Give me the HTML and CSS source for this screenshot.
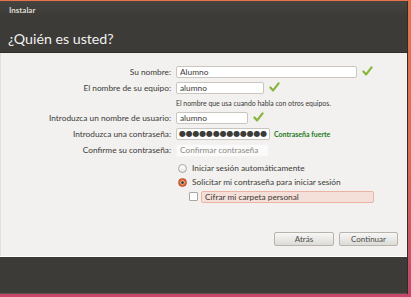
FILE: index.html
```html
<!DOCTYPE html>
<html lang="es">
<head>
    <meta charset="UTF-8">
    <title>Instalar</title>
    <link rel="stylesheet" href="styles.css">
</head>
<body>
    <div class="window">
        <!-- Cabecera oscura -->
        <div class="header">
            <div class="app-title">Instalar</div>
            <h1>¿Quién es usted?</h1>
        </div>

        <!-- Formulario -->
        <div class="content">
            <div class="row">
                <label class="label">Su nombre:</label>
                <input class="field field-name" type="text" value="Alumno">
                <svg class="tick" viewBox="0 0 12 11"><path d="M1.5 6 L4.5 9.3 L10.5 1.5" /></svg>
            </div>
            <div class="row">
                <label class="label">El nombre de su equipo:</label>
                <input class="field field-host" type="text" value="alumno">
                <svg class="tick" viewBox="0 0 12 11"><path d="M1.5 6 L4.5 9.3 L10.5 1.5" /></svg>
            </div>
            <div class="hint">El nombre que usa cuando habla con otros equipos.</div>
            <div class="row">
                <label class="label">Introduzca un nombre de usuario:</label>
                <input class="field field-user" type="text" value="alumno">
                <svg class="tick" viewBox="0 0 12 11"><path d="M1.5 6 L4.5 9.3 L10.5 1.5" /></svg>
            </div>
            <div class="row">
                <label class="label">Introduzca una contraseña:</label>
                <div class="field field-pass"><span class="dots">●●●●●●●●●●●●●</span></div>
                <span class="strength">Contraseña fuerte</span>
            </div>
            <div class="row">
                <label class="label">Confirme su contraseña:</label>
                <input class="field field-confirm" type="text" placeholder="Confirmar contraseña">
            </div>

            <div class="options">
                <div class="option">
                    <span class="radio"></span>
                    <span>Iniciar sesión automáticamente</span>
                </div>
                <div class="option">
                    <span class="radio checked"></span>
                    <span>Solicitar mi contraseña para iniciar sesión</span>
                </div>
                <div class="option sub">
                    <span class="checkbox"></span>
                    <span class="highlight">Cifrar mi carpeta personal</span>
                </div>
            </div>

            <div class="buttons">
                <button class="btn btn-back">Atrás</button>
                <button class="btn">Continuar</button>
            </div>
        </div>

        <div class="footer"></div>
    </div>
</body>
</html>
```

FILE: styles.css
```css
/* Base */
body {
    margin: 0;
    padding: 0;
    width: 411px;
    height: 297px;
    overflow: hidden;
    font-family: 'Lato', 'DejaVu Sans', sans-serif;
    background: linear-gradient(to bottom, #e8734a 0%, #e06a52 50%, #c8456a 100%);
}

/* Ventana */
.window {
    margin-top: 1px;
    width: 408px;
    height: 293px;
    display: flex;
    flex-direction: column;
    background-color: #3c3b37;
    border-right: 1px solid #2e2d2a;
    box-sizing: border-box;
}

/* Cabecera */
.header {
    height: 52px;
    box-sizing: border-box;
    padding: 4px 9px 0;
    background: linear-gradient(to bottom, #45443f 0%, #3c3b37 30%, #3c3b37 100%);
    border-bottom: 1px solid #2f2e2b;
}

.app-title {
    color: #dfdbd2;
    font-size: 8px;
    font-weight: 700;
    line-height: 11px;
}

h1 {
    margin: 14px 0 0 -1px;
    color: #f2f1f0;
    font-size: 14.2px;
    font-weight: 400;
    line-height: 18px;
}

/* Contenido */
.content {
    height: 203px;
    box-sizing: border-box;
    padding-top: 13px;
    background-color: #f2f1f0;
    border-left: 1px solid #e2e0dc;
    display: flex;
    flex-direction: column;
    color: #3c3b37;
    font-size: 8.3px;
}

.row {
    display: flex;
    align-items: center;
    height: 12px;
    margin-bottom: 4px;
}

.label {
    width: 170px;
    flex-shrink: 0;
    text-align: right;
    margin-right: 5px;
    white-space: nowrap;
}

.field {
    flex-shrink: 0;
    height: 12px;
    box-sizing: border-box;
    border: 1px solid #c9c6c0;
    border-radius: 2px;
    background-color: #fff;
    padding: 0 3px;
    font-family: inherit;
    font-size: 8.3px;
    color: #3c3b37;
    outline: none;
}

.field-name { width: 181px; }
.field-host { width: 88px; }
.field-user { width: 72px; }
.field-pass {
    width: 94px;
    display: flex;
    align-items: center;
    padding-left: 2px;
}
.field-confirm {
    width: 93px;
    height: 13px;
    border-color: #f4f3f2;
    background-color: #fafafa;
}

.field-confirm::placeholder {
    color: #8d8a85;
}

.dots {
    white-space: nowrap;
    font-family: 'DejaVu Sans', sans-serif;
    font-size: 8px;
    letter-spacing: -0.2px;
    line-height: 10px;
    color: #3c3b37;
}

.tick {
    width: 11px;
    height: 10px;
    margin-left: 5px;
    margin-top: -2px;
}

.tick path {
    fill: none;
    stroke: #86b53c;
    stroke-width: 2.4;
    stroke-linecap: round;
    stroke-linejoin: round;
}

.strength {
    margin-left: 4px;
    color: #1e7a1e;
    font-size: 7px;
    font-weight: 700;
    white-space: nowrap;
}

.hint {
    margin: -1px 0 3px 175px;
    height: 12px;
    line-height: 12px;
    font-size: 6.9px;
    color: #3c3b37;
}

/* Opciones */
.options {
    margin-top: 1px;
    padding-left: 177px;
}

.option {
    display: flex;
    align-items: center;
    height: 14px;
    font-size: 8.3px;
}

.radio {
    width: 7px;
    height: 7px;
    border-radius: 50%;
    border: 1px solid #a9a6a0;
    background: linear-gradient(#ffffff, #e8e6e2);
    margin-right: 5px;
    position: relative;
}

.radio.checked {
    border-color: #c4522a;
    background: radial-gradient(circle, #f5f2ef 0 1.5px, #e0622f 2.5px);
}

.radio.checked::after {
    content: '';
    position: absolute;
    left: 2px;
    top: 2px;
    width: 3px;
    height: 3px;
    border-radius: 50%;
    background-color: #3c3b37;
}

.option.sub {
    height: 13px;
    margin-top: 1px;
    padding-left: 11px;
}

.checkbox {
    width: 7px;
    height: 7px;
    border: 1px solid #a9a6a0;
    border-radius: 1px;
    background-color: #fff;
    margin-right: 3px;
}

.highlight {
    width: 173px;
    height: 12px;
    line-height: 11px;
    box-sizing: border-box;
    padding-left: 3px;
    background-color: #f5dfd9;
    border: 1px solid #eab3a4;
    border-radius: 2px;
}

/* Botones */
.buttons {
    margin-top: auto;
    margin-bottom: 10px;
    display: flex;
    justify-content: flex-end;
    gap: 5px;
    padding-right: 9px;
}

.btn {
    height: 14px;
    width: 59px;
    padding: 0;
    border: 1px solid #b7b4ad;
    border-radius: 2px;
    background: linear-gradient(to bottom, #f7f7f6, #dddbd7);
    font-family: inherit;
    font-size: 8px;
    color: #4c4b47;
}

.btn-back {
    width: 60px;
}

/* Pie */
.footer {
    flex: 1;
    border-top: 1px solid #ffffff;
    background-color: #3c3b37;
    border-bottom: 1px solid #55544f;
}
```
